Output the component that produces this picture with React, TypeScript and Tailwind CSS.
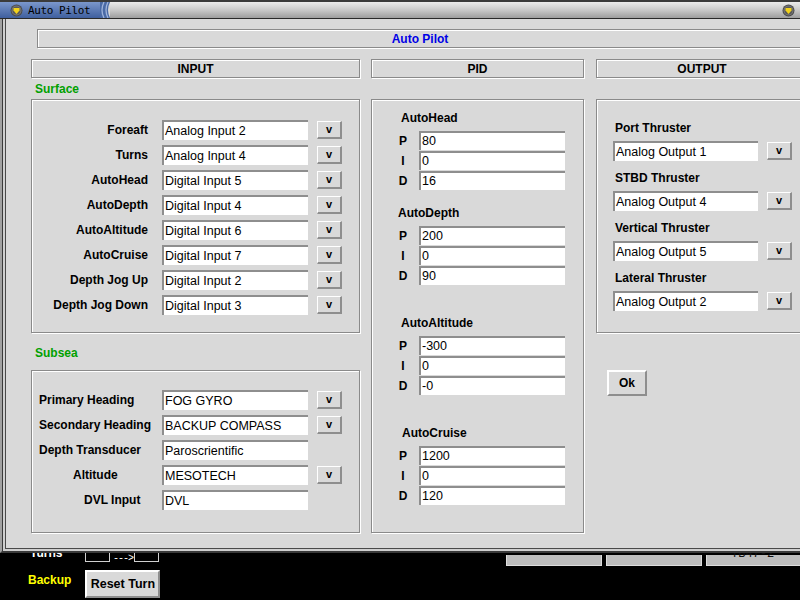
import React from 'react';

const etched = 'border border-[#8a8a8a] shadow-[inset_1px_1px_0_#ffffff,1px_1px_0_#ffffff]';

const Field = ({ value, w, h }: { value: string; w: string; h: string }) => (
  <div
    className={`${w} ${h} shrink-0 bg-white border-t-2 border-l-2 border-[#8e8e8e] flex items-center pl-[1px] text-[12.5px] leading-none text-black whitespace-nowrap overflow-hidden`}
  >
    {value}
  </div>
);

const DropButton = () => (
  <div className="w-[25px] h-[18px] shrink-0 bg-[#d9d9d9] border-t border-l border-white border-r-2 border-b-2 border-r-[#8e8e8e] border-b-[#8e8e8e] flex items-center justify-center text-[11px] font-bold leading-none">
    v
  </div>
);

const WinIcon = () => (
  <svg width="13" height="13" viewBox="0 0 13 13">
    <circle cx="6.5" cy="6.5" r="6" fill="#4a4a4a" />
    <circle cx="6.5" cy="6.5" r="5" fill="#7a7a7a" />
    <circle cx="6.5" cy="6.5" r="4" fill="#5a5a5a" />
    <path d="M3.5 4 H9.5 V6.5 L6.5 10 L3.5 6.5 Z" fill="#f2d21b" />
  </svg>
);

const surfaceRows = [
  ['Foreaft', 'Analog Input 2'],
  ['Turns', 'Analog Input 4'],
  ['AutoHead', 'Digital Input 5'],
  ['AutoDepth', 'Digital Input 4'],
  ['AutoAltitude', 'Digital Input 6'],
  ['AutoCruise', 'Digital Input 7'],
  ['Depth Jog Up', 'Digital Input 2'],
  ['Depth Jog Down', 'Digital Input 3'],
];

const subseaRows = [
  { label: 'Primary Heading', value: 'FOG GYRO', indent: 'pl-[7px]', btn: true },
  { label: 'Secondary Heading', value: 'BACKUP COMPASS', indent: 'pl-[7px]', btn: true },
  { label: 'Depth Transducer', value: 'Paroscrientific', indent: 'pl-[7px]', btn: false },
  { label: 'Altitude', value: 'MESOTECH', indent: 'pl-[41px]', btn: true },
  { label: 'DVL Input', value: 'DVL', indent: 'pl-[52px]', btn: false },
];

const pidGroups = [
  { name: 'AutoHead', indent: 'pl-[29px]', top: 'mt-[11px]', values: ['80', '0', '16'] },
  { name: 'AutoDepth', indent: 'pl-[26px]', top: 'mt-[16px]', values: ['200', '0', '90'] },
  { name: 'AutoAltitude', indent: 'pl-[29px]', top: 'mt-[31px]', values: ['-300', '0', '-0'] },
  { name: 'AutoCruise', indent: 'pl-[30px]', top: 'mt-[31px]', values: ['1200', '0', '120'] },
];

const outputs = [
  ['Port Thruster', 'Analog Output 1'],
  ['STBD Thruster', 'Analog Output 4'],
  ['Vertical Thruster', 'Analog Output 5'],
  ['Lateral Thruster', 'Analog Output 2'],
];

const App = () => {
  return (
    <div className="w-[800px] h-[600px] bg-black overflow-hidden flex flex-col font-['Liberation_Sans',Arial,sans-serif] text-black">
      {/* dialog window */}
      <div className="h-[553px] shrink-0 flex flex-col">
        {/* title bar */}
        <div className="h-[19px] shrink-0 flex border-t-2 border-t-[#3b3b3b] border-b border-b-[#2a2a2a]">
          <div className="w-[100px] shrink-0 flex items-center bg-linear-to-b from-[#7b97cc] to-[#3f5f9e] pl-[10px]">
            <WinIcon />
            <span className="ml-[5px] font-['DejaVu_Sans_Mono',monospace] text-[11px] tracking-[-0.4px] leading-none text-black">
              Auto Pilot
            </span>
          </div>
          <div className="flex-1 flex items-center bg-linear-to-b from-[#ececec] via-[#c9c9c9] to-[#9e9e9e]">
            <svg width="10" height="16" viewBox="0 0 10 16" className="shrink-0">
              <rect x="0" y="0" width="10" height="16" fill="#4a6aa6" />
              <path d="M4 0 Q0 8 4 16" stroke="#9fb4dc" strokeWidth="1.3" fill="none" />
              <path d="M8 0 Q4 8 8 16" stroke="#9fb4dc" strokeWidth="1.3" fill="none" />
              <path d="M10 0 Q6 8 10 16 L10 16 Z" fill="#d6d6d6" />
            </svg>
            <div className="flex-1" />
            <div className="mr-[5px] flex items-center">
              <WinIcon />
            </div>
          </div>
        </div>

        {/* frame */}
        <div className="flex-1 min-h-0 flex bg-[#cfcfcf] border-l-2 border-l-[#a2a2a2] border-b-2 border-b-[#3a3a3a]">
          <div className="flex-1 min-w-0 flex border-l border-l-[#3a3a3a] pl-[2px] pb-[2px]">
            <div className="flex-1 min-w-0 flex flex-col overflow-hidden bg-[#d9d9d9] border-l border-b border-[#4a4a4a]">
              {/* heading */}
              <div className={`ml-[31px] mt-[10px] w-[766px] h-[19px] shrink-0 flex items-center justify-center ${etched}`}>
                <span className="text-[12px] font-bold text-[#0000e6] leading-none">Auto Pilot</span>
              </div>

              <div className="ml-[25px] mt-[11px] flex items-start shrink-0">
                {/* INPUT column */}
                <div className="w-[329px] shrink-0 flex flex-col">
                  <div className={`h-[19px] flex items-center justify-center ${etched}`}>
                    <span className="text-[12px] font-bold leading-none">INPUT</span>
                  </div>
                  <div className="h-[21px] flex items-center pl-[4px] text-[12px] font-bold text-[#00a000]">Surface</div>
                  <div className={`h-[234px] flex flex-col gap-[5px] pt-[20px] ${etched}`}>
                    {surfaceRows.map(([label, value]) => (
                      <div key={label} className="h-[20px] flex items-center">
                        <div className="w-[130px] pr-[14px] text-right text-[12px] font-bold whitespace-nowrap">{label}</div>
                        <Field value={value} w="w-[146px]" h="h-[20px]" />
                        <div className="ml-[9px]">
                          <DropButton />
                        </div>
                      </div>
                    ))}
                  </div>
                  <div className="h-[37px] pt-[13px] pl-[4px] text-[12px] leading-[14px] font-bold text-[#00a000]">Subsea</div>
                  <div className={`h-[163px] flex flex-col gap-[5px] pt-[19px] ${etched}`}>
                    {subseaRows.map((r) => (
                      <div key={r.label} className="h-[20px] flex items-center">
                        <div className={`w-[130px] ${r.indent} text-left text-[12px] font-bold whitespace-nowrap`}>{r.label}</div>
                        <Field value={r.value} w="w-[146px]" h="h-[20px]" />
                        {r.btn && (
                          <div className="ml-[9px]">
                            <DropButton />
                          </div>
                        )}
                      </div>
                    ))}
                  </div>
                </div>

                {/* PID column */}
                <div className="w-[213px] ml-[11px] shrink-0 flex flex-col">
                  <div className={`h-[19px] flex items-center justify-center ${etched}`}>
                    <span className="text-[12px] font-bold leading-none">PID</span>
                  </div>
                  <div className={`mt-[21px] h-[434px] flex flex-col ${etched}`}>
                    {pidGroups.map((g) => (
                      <div key={g.name} className={`${g.top} flex flex-col`}>
                        <div className={`${g.indent} h-[14px] text-[12px] leading-[14px] font-bold`}>{g.name}</div>
                        <div className="mt-[6px] flex flex-col gap-[1px]">
                          {['P', 'I', 'D'].map((k, i) => (
                            <div key={k} className="flex items-center h-[19px]">
                              <div className="ml-[21px] w-[20px] text-center text-[12px] font-bold">{k}</div>
                              <div className="ml-[6px]">
                                <Field value={g.values[i]} w="w-[146px]" h="h-[19px]" />
                              </div>
                            </div>
                          ))}
                        </div>
                      </div>
                    ))}
                  </div>
                </div>

                {/* OUTPUT column */}
                <div className="w-[212px] ml-[12px] shrink-0 flex flex-col">
                  <div className={`h-[19px] flex items-center justify-center ${etched}`}>
                    <span className="text-[12px] font-bold leading-none">OUTPUT</span>
                  </div>
                  <div className={`mt-[21px] h-[234px] flex flex-col gap-[10px] pt-[21px] ${etched}`}>
                    {outputs.map(([label, value]) => (
                      <div key={label} className="flex flex-col">
                        <div className="pl-[18px] h-[14px] text-[12px] leading-[14px] font-bold whitespace-nowrap">{label}</div>
                        <div className="mt-[6px] h-[20px] flex items-center pl-[16px]">
                          <Field value={value} w="w-[145px]" h="h-[20px]" />
                          <div className="ml-[9px]">
                            <DropButton />
                          </div>
                        </div>
                      </div>
                    ))}
                  </div>
                  <div className="mt-[37px] ml-[11px] w-[40px] h-[26px] bg-[#d9d9d9] border-t-2 border-l-2 border-white border-r-2 border-b-2 border-r-[#8e8e8e] border-b-[#8e8e8e] flex items-center justify-center text-[12px] font-bold">
                    Ok
                  </div>
                </div>
              </div>
            </div>
          </div>
        </div>
      </div>

      {/* application behind the dialog */}
      <div className="flex-1 flex flex-col overflow-hidden">
        <div className="h-[13px] shrink-0 flex items-start">
          <div className="ml-[30px] -mt-[7px] w-[55px] text-[12px] leading-[14px] font-bold text-white">Turns</div>
          <div className="-mt-[5px] w-[25px] h-[14px] border border-[#d0d0d0] shrink-0" />
          <div className="ml-[3px] w-[21px] mt-[0px] text-[10px] leading-[12px] text-white font-['Liberation_Mono',monospace] tracking-[-1px]">
            ---&gt;
          </div>
          <div className="-mt-[5px] w-[25px] h-[14px] border border-[#d0d0d0] shrink-0" />
          <div className="flex-1" />
          <div className="w-[294px] shrink-0 flex gap-[4px] mt-[2px]">
            <div className="w-[96px] h-[11px] bg-[#bdbdbd] border-b border-x border-[#dedede]" />
            <div className="w-[96px] h-[11px] bg-[#bdbdbd] border-b border-x border-[#dedede]" />
            <div className="flex-1 h-[11px] bg-[#bdbdbd] border-b border-l border-[#dedede]">
              <div className="-mt-[8px] pl-[24px] text-[12px] leading-[14px] text-[#111] font-['Liberation_Mono',monospace]">
                TB47-2
              </div>
            </div>
          </div>
        </div>
        <div className="mt-[4px] flex items-start">
          <div className="ml-[28px] mt-[3px] text-[12px] leading-[14px] font-bold text-[#ffff00]">Backup</div>
          <div className="ml-[14px] w-[75px] h-[28px] bg-[#d9d9d9] border-2 border-t-white border-l-white border-r-[#8e8e8e] border-b-[#8e8e8e] flex items-center justify-center text-[12.5px] font-bold">
            Reset Turn
          </div>
        </div>
      </div>
    </div>
  );
};

export default App;
